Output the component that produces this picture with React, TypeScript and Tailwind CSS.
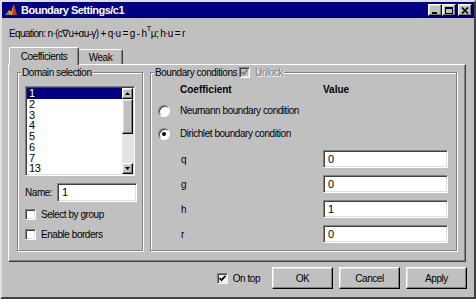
import React from "react";

const raised =
  "border border-t-white border-l-white border-r-black border-b-black shadow-[inset_-1px_-1px_0_#808080,inset_1px_1px_0_#dfdfdf]";
const sunken =
  "border border-t-[#808080] border-l-[#808080] border-r-white border-b-white shadow-[inset_1px_1px_0_#404040,inset_-1px_-1px_0_#dfdfdf]";
const etched = "border border-[#808080] shadow-[inset_1px_1px_0_#fff,1px_1px_0_#fff]";

function Check({ color = "#000" }: { color?: string }) {
  return (
    <svg width="9" height="9" viewBox="0 0 9 9">
      <polyline points="1.5,4 3.5,6.2 7.5,1.8" fill="none" stroke={color} strokeWidth="1.8" />
    </svg>
  );
}

function CheckBox({ checked, disabled }: { checked?: boolean; disabled?: boolean }) {
  return (
    <div
      className={`w-[11px] h-[11px] flex items-center justify-center ${sunken} ${
        disabled ? "bg-[#c0c0c0]" : "bg-white"
      }`}
    >
      {checked && <Check color={disabled ? "#808080" : "#000"} />}
    </div>
  );
}

function Radio({ on }: { on?: boolean }) {
  return (
    <div className="w-[12px] h-[12px] rounded-full border border-t-[#808080] border-l-[#808080] border-r-white border-b-white bg-white flex items-center justify-center shadow-[inset_1px_1px_0_#404040]">
      {on && <div className="w-[4px] h-[4px] rounded-full bg-black" />}
    </div>
  );
}

function GroupBox({
  title,
  className,
  children,
}: {
  title: React.ReactNode;
  className?: string;
  children: React.ReactNode;
}) {
  return (
    <div className={`relative ${etched} ${className ?? ""}`}>
      <div className="absolute -top-[7px] left-[3px] bg-[#c0c0c0] px-[1px] h-[13px] flex items-center leading-[13px]">
        {title}
      </div>
      {children}
    </div>
  );
}

function Arrow({ down }: { down?: boolean }) {
  return (
    <div className={`w-[11px] h-[11px] bg-[#c0c0c0] flex items-center justify-center ${raised}`}>
      <svg width="5" height="3" viewBox="0 0 5 3">
        <polygon points={down ? "0,0 5,0 2.5,3" : "0,3 5,3 2.5,0"} fill="#000" />
      </svg>
    </div>
  );
}

function CaptionButton({ children }: { children: React.ReactNode }) {
  return (
    <div className={`w-[14px] h-[12px] bg-[#c0c0c0] flex items-center justify-center ${raised}`}>
      {children}
    </div>
  );
}

function Button({ label }: { label: string }) {
  return (
    <div className={`w-[61px] h-[22px] bg-[#c0c0c0] flex items-center justify-center ${raised}`}>
      {label}
    </div>
  );
}

const domains = ["1", "2", "3", "4", "5", "6", "7", "13"];
const coeffs = [
  { name: "q", value: "0" },
  { name: "g", value: "0" },
  { name: "h", value: "1" },
  { name: "r", value: "0" },
];

export default function App() {
  return (
    <div
      className="w-[476px] h-[299px] bg-[#c0c0c0] border-2 border-t-[#dfdfdf] border-l-[#dfdfdf] border-r-[#404040] border-b-[#404040] text-[10px] tracking-[-0.45px] leading-[13px] text-black flex flex-col"
      style={{ fontFamily: '"Liberation Sans", Arial, sans-serif' }}
    >
      {/* title bar */}
      <div className="h-[16px] bg-[#000080] flex items-center pl-[2px] pr-[2px]">
        <svg width="14" height="14" viewBox="0 0 14 14">
          <polygon points="1,12 5,7 7,9 10,1 13,12" fill="#c0392b" />
          <polygon points="5,7 7,9 10,1 8,12 3,12" fill="#f39c12" />
          <polygon points="1,12 4,9 6,12" fill="#2e86c1" />
        </svg>
        <span className="ml-[3px] text-white font-bold text-[11px] tracking-[-0.5px]">
          Boundary Settings/c1
        </span>
        <div className="ml-auto flex items-center">
          <CaptionButton>
            <div className="w-[5px] h-[2px] bg-black mt-[5px] -ml-[2px]" />
          </CaptionButton>
          <CaptionButton>
            <div className="w-[8px] h-[7px] border border-black border-t-2" />
          </CaptionButton>
          <div className="ml-[2px]">
            <CaptionButton>
              <svg width="8" height="7" viewBox="0 0 8 7">
                <path d="M1 0.5 L7 6.5 M7 0.5 L1 6.5" stroke="#000" strokeWidth="1.6" />
              </svg>
            </CaptionButton>
          </div>
        </div>
      </div>

      {/* equation */}
      <div className="h-[29px] flex items-center pl-[7px] pt-[1px] tracking-[-0.65px]">
        Equation: n·(c∇u+αu-γ) + q·u = g - h<sup className="text-[8px] -top-[4px]">T</sup>μ; h·u = r
      </div>

      {/* tabs */}
      <div className="flex items-end h-[17px] pl-[7px]">
        <div className="relative z-10 -mb-[1px] h-[18px] w-[70px] bg-[#c0c0c0] border-t border-l border-t-white border-l-white border-r border-r-[#404040] rounded-t-[2px] shadow-[inset_-1px_0_0_#808080] flex items-center justify-center">
          Coefficients
        </div>
        <div className="h-[15px] w-[44px] bg-[#c0c0c0] border-t border-t-white border-r border-r-[#404040] rounded-tr-[2px] shadow-[inset_-1px_0_0_#808080] flex items-center justify-center">
          Weak
        </div>
      </div>

      {/* panel */}
      <div className="ml-[6px] w-[458px] h-[198px] border border-t-white border-l-white border-r-[#404040] border-b-[#404040] shadow-[inset_-1px_-1px_0_#808080] flex gap-[7px] pl-[8px] pt-[7px]">
        <GroupBox title="Domain selection" className="w-[126px] h-[179px]">
          <div className="flex flex-col pl-[7px] pt-[13px]">
            <div className={`w-[110px] h-[90px] bg-white p-[1px] flex ${sunken}`}>
              <div className="flex-1 overflow-hidden text-[11px]">
                {domains.map((d, i) => (
                  <div
                    key={d}
                    className={`h-[10.75px] leading-[10.75px] pl-[2px] ${
                      i === 0 ? "bg-[#000080] text-white" : ""
                    }`}
                  >
                    {d}
                  </div>
                ))}
              </div>
              <div className="w-[11px] flex flex-col">
                <Arrow />
                <div className={`h-[35px] bg-[#c0c0c0] ${raised}`} />
                <div className="flex-1 bg-[#e4e4e4]" />
                <Arrow down />
              </div>
            </div>
            <div className="mt-[7px] flex items-center">
              <span className="w-[32px]">Name:</span>
              <div className={`w-[80px] h-[19px] bg-white flex items-center pl-[4px] text-[11px] ${sunken}`}>
                1
              </div>
            </div>
            <div className="mt-[6px] flex items-center gap-[5px] h-[13px]">
              <CheckBox />
              <span>Select by group</span>
            </div>
            <div className="mt-[7px] flex items-center gap-[5px] h-[13px]">
              <CheckBox />
              <span>Enable borders</span>
            </div>
          </div>
        </GroupBox>

        <GroupBox
          title={
            <span className="flex items-center">
              Boundary conditions
              <span className="ml-[2px] mr-[5px]">
                <CheckBox checked disabled />
              </span>
              <span className="text-[#808080] [text-shadow:1px_1px_0_#fff]">Unlock</span>
            </span>
          }
          className="w-[307px] h-[179px]"
        >
          <div className="flex flex-col pt-[10px]">
            <div className="h-[13px] flex items-center font-bold tracking-normal">
              <span className="pl-[29px] w-[172px]">Coefficient</span>
              <span>Value</span>
            </div>
            <div className="mt-[8px] h-[13px] flex items-center pl-[7px] gap-[10px]">
              <Radio />
              <span>Neumann boundary condition</span>
            </div>
            <div className="mt-[10px] h-[13px] flex items-center pl-[7px] gap-[10px]">
              <Radio on />
              <span>Dirichlet boundary condition</span>
            </div>
            <div className="mt-[10px] flex flex-col gap-[7px]">
              {coeffs.map((c) => (
                <div key={c.name} className="flex items-center">
                  <span className="pl-[30px] w-[172px]">{c.name}</span>
                  <div
                    className={`w-[125px] h-[18px] bg-white flex items-center pl-[4px] text-[11px] ${sunken}`}
                  >
                    {c.value}
                  </div>
                </div>
              ))}
            </div>
          </div>
        </GroupBox>
      </div>

      {/* bottom buttons */}
      <div className="mt-[5px] h-[22px] flex items-center justify-end pr-[7px]">
        <div className="flex items-center gap-[5px] mr-[12px]">
          <CheckBox checked />
          <span>On top</span>
        </div>
        <div className="flex gap-[6px]">
          <Button label="OK" />
          <Button label="Cancel" />
          <Button label="Apply" />
        </div>
      </div>
    </div>
  );
}
